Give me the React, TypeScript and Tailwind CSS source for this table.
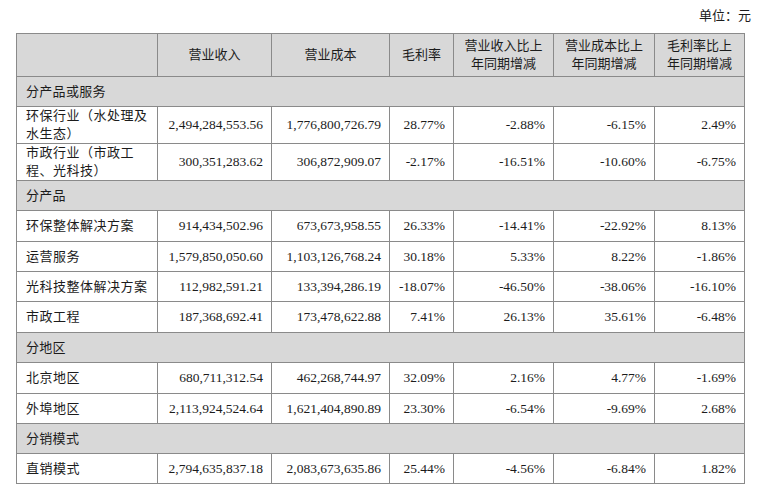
const font = { fontFamily: '"Liberation Serif", "Noto Sans CJK SC", serif' };

type Row =
  | { kind: 'section'; label: string }
  | { kind: 'data'; label: string[]; values: string[]; h: string };

const rows: Row[] = [
  { kind: 'section', label: '分产品或服务' },
  { kind: 'data', label: ['环保行业（水处理及', '水生态）'], values: ['2,494,284,553.56', '1,776,800,726.79', '28.77%', '-2.88%', '-6.15%', '2.49%'], h: 'h-[36px]' },
  { kind: 'data', label: ['市政行业（市政工', '程、光科技）'], values: ['300,351,283.62', '306,872,909.07', '-2.17%', '-16.51%', '-10.60%', '-6.75%'], h: 'h-[37px]' },
  { kind: 'section', label: '分产品' },
  { kind: 'data', label: ['环保整体解决方案'], values: ['914,434,502.96', '673,673,958.55', '26.33%', '-14.41%', '-22.92%', '8.13%'], h: 'h-[31px]' },
  { kind: 'data', label: ['运营服务'], values: ['1,579,850,050.60', '1,103,126,768.24', '30.18%', '5.33%', '8.22%', '-1.86%'], h: 'h-[30px]' },
  { kind: 'data', label: ['光科技整体解决方案'], values: ['112,982,591.21', '133,394,286.19', '-18.07%', '-46.50%', '-38.06%', '-16.10%'], h: 'h-[30px]' },
  { kind: 'data', label: ['市政工程'], values: ['187,368,692.41', '173,478,622.88', '7.41%', '26.13%', '35.61%', '-6.48%'], h: 'h-[31px]' },
  { kind: 'section', label: '分地区' },
  { kind: 'data', label: ['北京地区'], values: ['680,711,312.54', '462,268,744.97', '32.09%', '2.16%', '4.77%', '-1.69%'], h: 'h-[31px]' },
  { kind: 'data', label: ['外埠地区'], values: ['2,113,924,524.64', '1,621,404,890.89', '23.30%', '-6.54%', '-9.69%', '2.68%'], h: 'h-[30px]' },
  { kind: 'section', label: '分销模式' },
  { kind: 'data', label: ['直销模式'], values: ['2,794,635,837.18', '2,083,673,635.86', '25.44%', '-4.56%', '-6.84%', '1.82%'], h: 'h-[30px]' },
];

const headers = [
  ['营业收入'],
  ['营业成本'],
  ['毛利率'],
  ['营业收入比上', '年同期增减'],
  ['营业成本比上', '年同期增减'],
  ['毛利率比上', '年同期增减'],
];

export default function App() {
  return (
    <div className="w-[769px] h-[485px] bg-white text-[#1c1c1c] text-[13px]" style={font}>
      <div className="h-[33px] flex items-start justify-end pr-[18px] pt-[7px] leading-[18px]">
        单位：元
      </div>
      <table className="ml-[16px] w-[728px] table-fixed border-collapse">
        <colgroup>
          <col className="w-[141px]" />
          <col className="w-[114px]" />
          <col className="w-[118px]" />
          <col className="w-[64px]" />
          <col className="w-[100px]" />
          <col className="w-[101px]" />
          <col className="w-[90px]" />
        </colgroup>
        <thead>
          <tr className="h-[43px] bg-[#d8d8d8]">
            <th className="border border-[#8a8a8a] font-normal" />
            {headers.map((lines, i) => (
              <th key={i} className="border border-[#8a8a8a] font-normal text-center leading-[18px] p-0">
                {lines.map((l) => (
                  <div key={l}>{l}</div>
                ))}
              </th>
            ))}
          </tr>
        </thead>
        <tbody>
          {rows.map((r, i) =>
            r.kind === 'section' ? (
              <tr key={i} className="h-[30px] bg-[#d8d8d8]">
                <td colSpan={7} className="border border-[#8a8a8a] pl-[9px] leading-[18px] tracking-[0.3px]">
                  {r.label}
                </td>
              </tr>
            ) : (
              <tr key={i} className={r.h}>
                <td className="border border-[#8a8a8a] pl-[9px] pr-0 leading-[18px] tracking-[0.5px] whitespace-nowrap">
                  {r.label.map((l) => (
                    <div key={l}>{l}</div>
                  ))}
                </td>
                {r.values.map((v, j) => (
                  <td key={j} className="border border-[#8a8a8a] text-right pr-[8px] text-[13.5px] leading-[18px] whitespace-nowrap">
                    {v}
                  </td>
                ))}
              </tr>
            ),
          )}
        </tbody>
      </table>
    </div>
  );
}
